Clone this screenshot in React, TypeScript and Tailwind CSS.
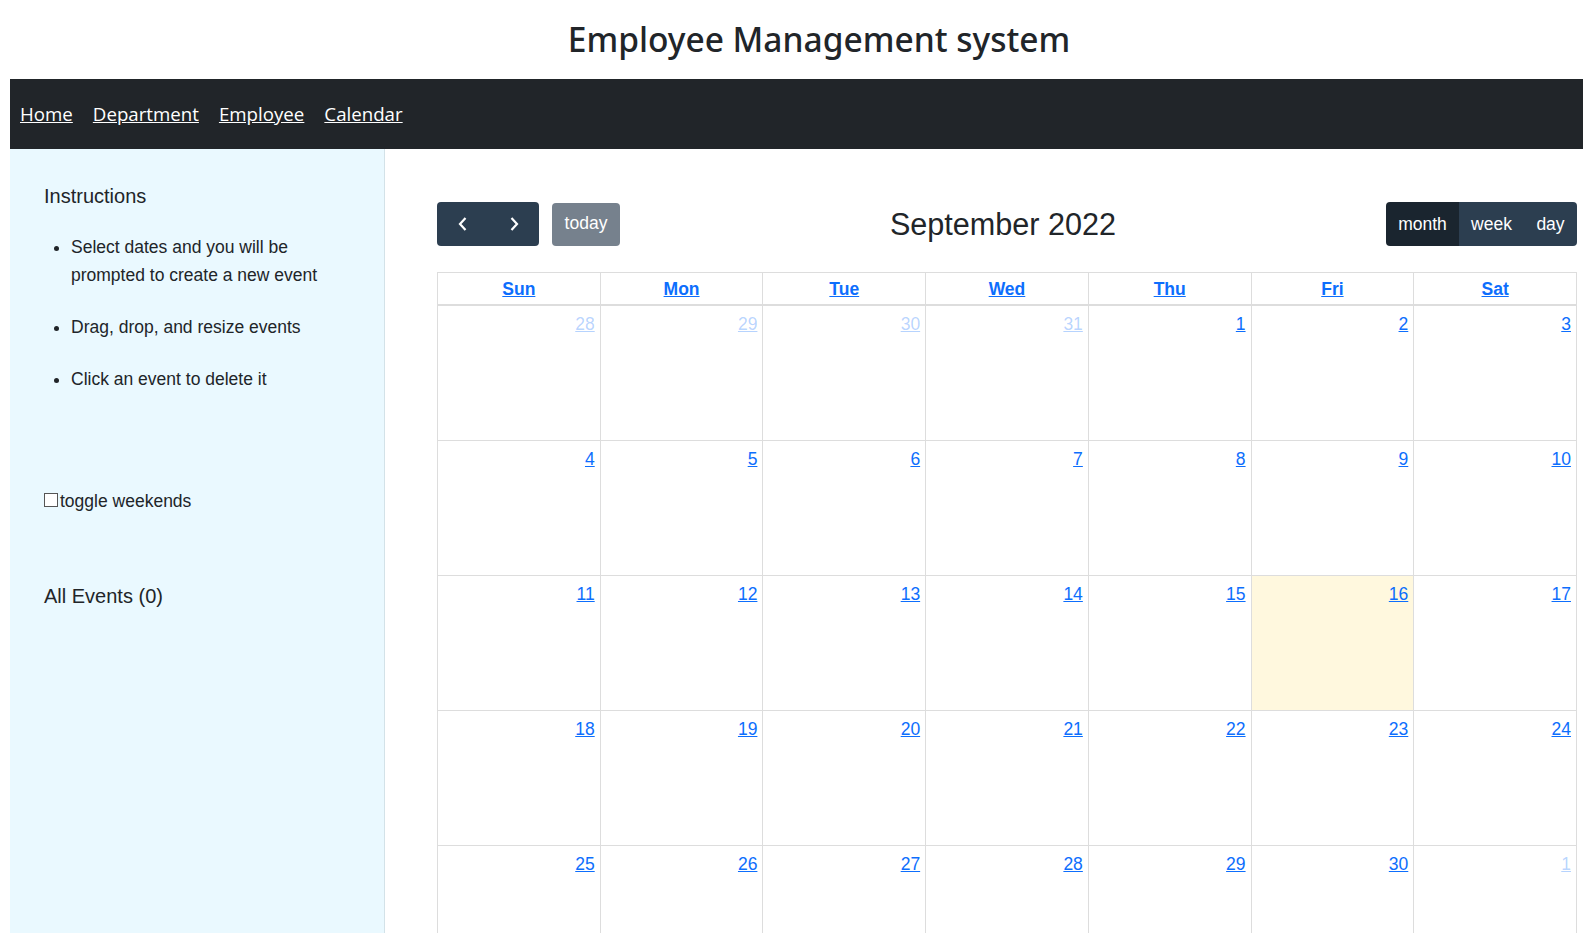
import React from 'react';

const weeks: { d: number; other?: boolean; today?: boolean }[][] = [
  [{ d: 28, other: true }, { d: 29, other: true }, { d: 30, other: true }, { d: 31, other: true }, { d: 1 }, { d: 2 }, { d: 3 }],
  [{ d: 4 }, { d: 5 }, { d: 6 }, { d: 7 }, { d: 8 }, { d: 9 }, { d: 10 }],
  [{ d: 11 }, { d: 12 }, { d: 13 }, { d: 14 }, { d: 15 }, { d: 16, today: true }, { d: 17 }],
  [{ d: 18 }, { d: 19 }, { d: 20 }, { d: 21 }, { d: 22 }, { d: 23 }, { d: 24 }],
  [{ d: 25 }, { d: 26 }, { d: 27 }, { d: 28 }, { d: 29 }, { d: 30 }, { d: 1, other: true }],
];

const dayNames = ['Sun', 'Mon', 'Tue', 'Wed', 'Thu', 'Fri', 'Sat'];

export default function App() {
  return (
    <div className="bg-white text-[#212529] overflow-hidden h-[933px]">
      {/* Page title */}
      <div className="h-[79px] flex items-center justify-center pl-[55px]">
        <h1 className="font-['Segoe_UI','Noto_Sans',sans-serif] text-[33.5px] font-medium leading-none">
          Employee Management system
        </h1>
      </div>

      <div className="ml-[10px]">
        {/* Navbar */}
        <nav className="h-[70px] bg-[#212529] flex items-center gap-[20px] pl-[10px] font-['Segoe_UI','Open_Sans',sans-serif] text-[18.7px]">
          <a href="#" className="text-white underline">Home</a>
          <a href="#" className="text-white underline">Department</a>
          <a href="#" className="text-white underline">Employee</a>
          <a href="#" className="text-white underline">Calendar</a>
        </nav>

        <div className="flex font-['Liberation_Sans',Arial,sans-serif]">
          {/* Sidebar */}
          <aside className="w-[375px] shrink-0 bg-[#eaf9ff] border-r border-[#d3e2e8] h-[784px] pl-[34px] pr-[30px]">
            <h2 className="text-[20px] leading-[30px] pt-[32px]">Instructions</h2>
            <ul className="list-disc pl-[27px] mt-[22px] text-[17.5px] leading-[28px] flex flex-col gap-[24px]">
              <li>Select dates and you will be prompted to create a new event</li>
              <li>Drag, drop, and resize events</li>
              <li>Click an event to delete it</li>
            </ul>

            <label className="flex items-center mt-[95px] text-[17.5px] leading-[26px]">
              <span className="w-[14px] h-[14px] border border-[#555] bg-white mr-[2px] -mt-[2px]" />
              toggle weekends
            </label>

            <h2 className="text-[20px] leading-[30px] mt-[67px]">All Events (0)</h2>
          </aside>

          {/* Calendar */}
          <main className="w-[1198px] shrink-0 pl-[52px] pt-[53px] text-[17.5px]">
            <div className="flex items-center justify-between h-[44px] w-[1140px]">
              <div className="flex items-center gap-[13px]">
                <div className="flex h-[44px] w-[102px] rounded-[4px] bg-[#2c3e50]">
                  <button className="flex-1 flex items-center justify-center text-white">
                    <svg width="10" height="16" viewBox="0 0 10 16" fill="none">
                      <path d="M7.5 2 L2 8 L7.5 14" stroke="white" strokeWidth="2.2" />
                    </svg>
                  </button>
                  <button className="flex-1 flex items-center justify-center text-white">
                    <svg width="10" height="16" viewBox="0 0 10 16" fill="none">
                      <path d="M2.5 2 L8 8 L2.5 14" stroke="white" strokeWidth="2.2" />
                    </svg>
                  </button>
                </div>
                <button className="h-[43px] w-[68px] rounded-[4px] bg-[#76818d] text-white leading-none">
                  today
                </button>
              </div>

              <h2 className="text-[30.6px] leading-none text-[#212529]">September 2022</h2>

              <div className="flex h-[44px] rounded-[4px] overflow-hidden text-white">
                <button className="w-[73px] bg-[#1a252f]">month</button>
                <button className="w-[65px] bg-[#2c3e50]">week</button>
                <button className="w-[53px] bg-[#2c3e50]">day</button>
              </div>
            </div>

            {/* Month grid */}
            <div className="mt-[26px] w-[1140px] border-l border-t border-[#ddd]">
              <div className="grid grid-cols-7 h-[33px] border-b-2 border-[#ddd]">
                {dayNames.map((n) => (
                  <div
                    key={n}
                    className="border-r border-[#ddd] flex items-center justify-center font-bold text-[#0d6efd] underline pt-[1px]"
                  >
                    {n}
                  </div>
                ))}
              </div>
              {weeks.map((w, i) => (
                <div key={i} className="grid grid-cols-7 h-[135px] border-b border-[#ddd]">
                  {w.map((c, j) => (
                    <div
                      key={j}
                      className={`border-r border-[#ddd] text-right pr-[5px] pt-[5px] leading-[26px] ${
                        c.today ? 'bg-[#fff8de]' : ''
                      }`}
                    >
                      <a
                        href="#"
                        className={`underline ${c.other ? 'text-[#0d6efd]/30' : 'text-[#0d6efd]'}`}
                      >
                        {c.d}
                      </a>
                    </div>
                  ))}
                </div>
              ))}
            </div>
          </main>
        </div>
      </div>
    </div>
  );
}
